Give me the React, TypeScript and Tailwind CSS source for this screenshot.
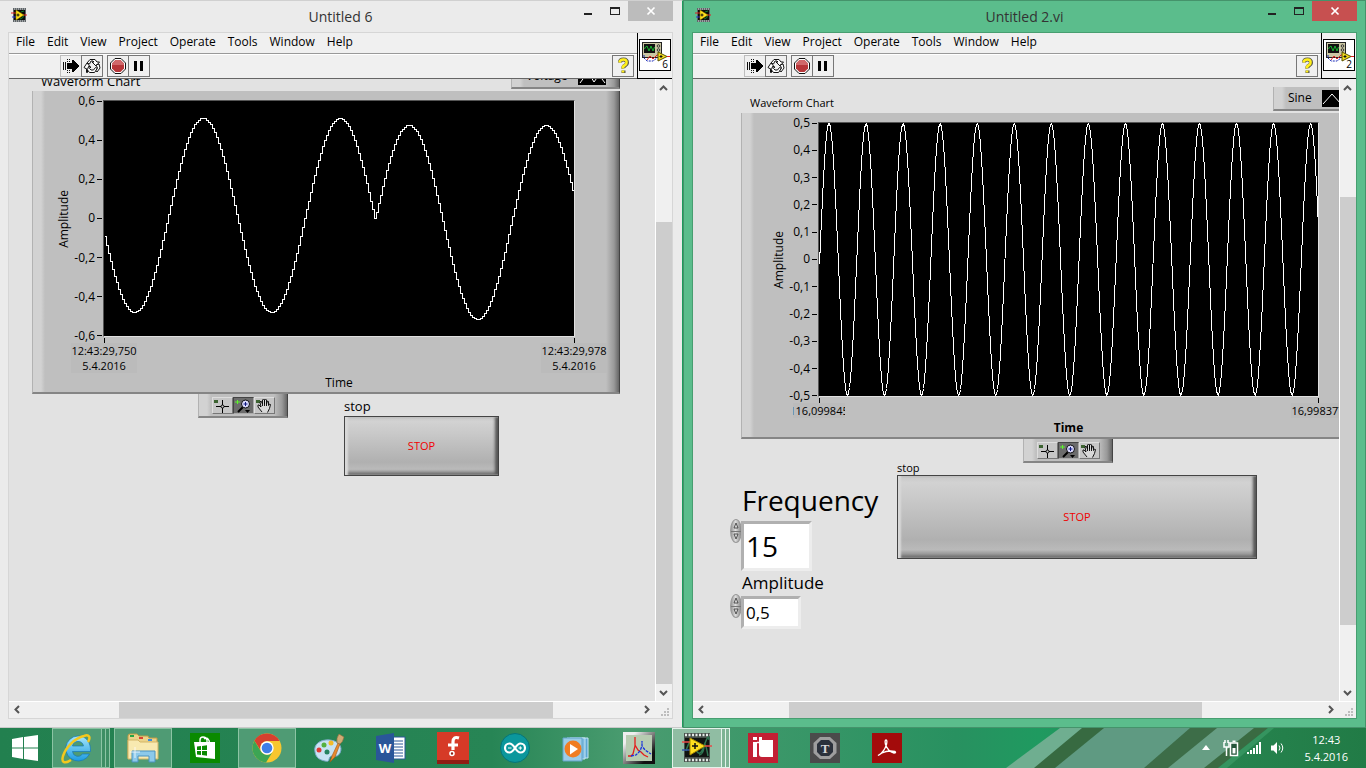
import React from "react";
import clsx from "clsx";

type Point = [number, number];

// ---------- signal data ----------

const voltagePoints = () => {
  const points: Point[] = [];
  for (let x = 0; x <= 470; x += 2) {
    const early = x < 272;
    const phase = ((x - (early ? 98 : 304)) / 137) * Math.PI * 2;
    const y = (early ? 114 : 121) - Math.cos(phase) * 97;
    const last = points[points.length - 1];
    if (last) points.push([x, last[1]]);
    points.push([x, Math.round(y)]);
  }
  return points;
};

const sinePoints = () => {
  const points: Point[] = [];
  for (let x = 0; x <= 499; x++) {
    points.push([x, Math.round(136 - Math.cos(((x - 9.5) / 37.05) * Math.PI * 2) * 136)]);
  }
  return points;
};

const toPolyline = (points: Point[]) => points.map(([x, y]) => `${x + 0.5},${y + 0.5}`).join(" ");

const MENU = ["File", "Edit", "View", "Project", "Operate", "Tools", "Window", "Help"];

// ---------- icons ----------

const ViIcon = ({ className }: { className?: string }) => (
  <svg viewBox="0 0 16 16" className={className} aria-hidden="true">
    <rect x="2" y="1" width="13" height="14" fill="#5f6468" />
    <path d="M3 2h11M3 14h11" stroke="#d9dcdc" strokeWidth="1" strokeDasharray="1 1" />
    <rect x="3" y="3" width="11" height="10" fill="#0c0c0c" />
    <path d="M10 5l3-1M9 12q3 0 4-4" stroke="#0f7d2c" fill="none" />
    <path d="M0 6h5M12 8h4" stroke="#e02020" />
    <path d="M1 10h4" stroke="#2433d6" />
    <path d="M5 3l8 5-8 5z" fill="#ffe11a" stroke="#8a7500" strokeWidth=".5" />
    <path d="M5.500 8h3M7 6.500v3" stroke="#111" />
  </svg>
);

const ScopeIcon = ({ number }: { number: string }) => (
  <div className="relative mx-px mt-[6px] h-8 w-8 border border-black bg-white">
    <svg viewBox="0 0 30 30" className="h-full w-full" aria-hidden="true">
      <rect x="2.500" y="2.500" width="19" height="15" fill="#cbc7a3" stroke="#222" />
      <rect x="4" y="4" width="11" height="9" fill="#111" />
      <path d="M4.500 9l1-2 1.500-1 2 5 2-5 2 5 1.500-4" fill="none" stroke="#17b52f" />
      <circle cx="18.500" cy="6" r="1.300" fill="none" stroke="#333" />
      <circle cx="18.500" cy="10" r="1.300" fill="none" stroke="#333" />
      <path d="M4 15v3l3 3h6l4-3" fill="none" stroke="#1a2ab8" strokeDasharray="2 1" />
      <path d="M7 20l3-4 3 3 4-4h3" fill="none" stroke="#e02020" />
      <path d="M18 12l9 4.500-9 4.500z" fill="#f5df1d" stroke="#5b5200" />
      <path d="M19.500 16.500h3M21 15v3" stroke="#111" />
      <path d="M27 16.500h3" stroke="#e02020" />
    </svg>
    <span className="absolute right-[2px] bottom-0 text-[10px] leading-[12px]">{number}</span>
  </div>
);

const RunIcon = () => (
  <svg viewBox="0 0 20 20" className="h-5 w-5" aria-hidden="true" shapeRendering="crispEdges">
    <path d="M2.500 6v8M4.500 6v8" stroke="#111" />
    <path d="M6.500 3v3M8.500 3v3M6.500 14v3M8.500 14v3" stroke="#111" strokeDasharray="1 1" />
    <path d="M6 7h5V4h1l6 6-6 6h-1v-3H6z" fill="#000" />
  </svg>
);

const RunLoopIcon = () => (
  <svg viewBox="0 0 20 20" className="h-5 w-5" aria-hidden="true">
    <g fill="#fff" stroke="#111" strokeWidth="1" strokeLinejoin="miter">
      <path d="M5 7l3-3.500h5l2 2.500h2.500l-3.500 4-4-4h2l-1-1H9L7.500 8z" />
      <path d="M15.500 12.500l-3 4h-5L5.500 14v2.500h-1V11H9l-1.500 1.500L9 14h2.500l2-2.500z" />
      <path d="M2 11.500L5 7l3 3.500H6.500l-1 3zM14 9l3-1 1 4-3 4-1-1.500 1.500-2.500z" />
    </g>
  </svg>
);

const AbortIcon = () => (
  <svg viewBox="0 0 20 20" className="h-5 w-5" aria-hidden="true">
    <path d="M7 2.500h6l4.500 4.500v6L13 17.500H7L2.500 13V7z" fill="#fff" stroke="#111" />
    <path d="M7.500 4h5L16 7.500v5L12.500 16h-5L4 12.500v-5z" fill="#b73639" />
    <path d="M7.500 4h5L16 7.500V9H4V7.500z" fill="#d0686a" />
  </svg>
);

const PauseIcon = () => (
  <svg viewBox="0 0 20 20" className="h-5 w-5" aria-hidden="true">
    <path d="M5 5h3v10H5zM11 5h3v10h-3z" fill="#000" />
  </svg>
);

const HelpIcon = () => (
  <svg viewBox="0 0 20 20" className="h-5 w-5" aria-hidden="true" fill="none">
    <path d="M7 6.500Q7 3.500 10.500 3.500T14 7Q14 8.500 12 9.500T10.500 12.500M10.500 14.500v2.500" stroke="#55554a" strokeWidth="4" />
    <path d="M6.500 6.500Q7 3.500 10.500 3.500T13.500 7Q13.500 8.500 11.500 9.500T10 12.500M10 14.500v2" stroke="#ffef1a" strokeWidth="2.600" />
  </svg>
);

const Arrow = ({ d }: { d: string }) => (
  <svg viewBox="0 0 17 17" className="h-[17px] w-[17px] shrink-0" aria-hidden="true">
    <path d={d} fill="none" stroke="#555" strokeWidth="2" />
  </svg>
);

// ---------- window chrome ----------

type ScrollProps = { before: number; size: number; after: number };

const VerticalScroll = ({ before, size, after }: ScrollProps) => (
  <div className="flex w-[17px] shrink-0 flex-col border-l border-white bg-[#f0f0f0]">
    <Arrow d="M4 11l3.500-3.500L11 11" />
    <div className="flex min-h-0 flex-1 flex-col">
      <div style={{ flexGrow: before }} />
      <div className="bg-[#cdcdcd]" style={{ flexGrow: size }} />
      <div style={{ flexGrow: after }} />
    </div>
    <Arrow d="M4 7l3.500 3.500L11 7" />
  </div>
);

const HorizontalScroll = ({ before, size, after }: ScrollProps) => (
  <div className="flex h-[17px] shrink-0 border-t border-white bg-[#f0f0f0]">
    <Arrow d="M10 4l-3.500 3.500L10 11" />
    <div className="flex min-w-0 flex-1">
      <div style={{ flexGrow: before }} />
      <div className="bg-[#cdcdcd]" style={{ flexGrow: size }} />
      <div style={{ flexGrow: after }} />
    </div>
    <Arrow d="M7 4l3.500 3.500L7 11" />
    <svg viewBox="0 0 17 16" className="h-4 w-[17px] shrink-0" aria-hidden="true" fill="#bdbdbd">
      <path d="M12 6h2v2h-2zM9 9h2v2H9zM12 9h2v2h-2zM6 12h2v2H6zM9 12h2v2H9zM12 12h2v2h-2z" />
    </svg>
  </div>
);

const ToolButton = ({ label, light, children }: { label: string; light?: boolean; children: React.ReactNode }) => (
  <button
    type="button"
    aria-label={label}
    className={clsx(
      "-ml-px flex h-[22px] w-[22px] items-center justify-center border",
      light ? "border-[#bdbdbd]" : "border-[#777]",
    )}
  >
    {children}
  </button>
);

type ViWindowProps = {
  title: string;
  number: string;
  active?: boolean;
  vertical: ScrollProps;
  horizontal: ScrollProps;
  children: React.ReactNode;
};

const ViWindow = ({ title, number, active, vertical, horizontal, children }: ViWindowProps) => (
  <section
    className={clsx(
      "flex min-w-0 flex-1 flex-col border-y pb-2",
      active
        ? "border-x border-[#45936b] bg-[#5bbd8c] px-2"
        : "border-r border-t-[#d0d0d0] border-r-[#1c9a5c] border-b-[#c9c9c9] bg-[#ebebeb] pr-[9px] pl-2",
    )}
  >
    <header className="grid h-[31px] shrink-0 grid-cols-[1fr_auto_1fr] items-start">
      <ViIcon className="mt-[6px] ml-[3px] h-4 w-4" />
      <h1 className="text-[14px] leading-8 text-[#333]">{title}</h1>
      <div className="flex justify-end">
        <button type="button" aria-label="Minimize" className="flex h-5 w-[26px] items-center justify-center">
          <svg viewBox="0 0 12 10" className="h-[10px] w-3" aria-hidden="true">
            <path d="M2 8h8" stroke="#222" strokeWidth="2" />
          </svg>
        </button>
        <button type="button" aria-label="Maximize" className="flex h-5 w-[27px] items-center justify-center">
          <svg viewBox="0 0 12 10" className="h-[10px] w-3" aria-hidden="true" shapeRendering="crispEdges">
            <path d="M1.500 1.500h9v7h-9z" fill="none" stroke="#222" />
            <path d="M1 2.500h10" stroke="#222" />
          </svg>
        </button>
        <button
          type="button"
          aria-label="Close"
          className={clsx("flex h-5 w-[45px] items-center justify-center", active ? "bg-[#c75050]" : "bg-[#bcbcbc]")}
        >
          <svg viewBox="0 0 10 10" className="h-[10px] w-[10px]" aria-hidden="true">
            <path d="M1.500 1.500l7 7M8.500 1.500l-7 7" stroke="#fff" strokeWidth="1.700" />
          </svg>
        </button>
      </div>
    </header>

    <div
      className={clsx(
        "flex min-h-0 flex-1 flex-col border bg-[#f0f0f0]",
        active ? "border-[#479e70]" : "border-[#d6d6d6]",
      )}
    >
      <div className="flex shrink-0">
        <div className="min-w-0 flex-1">
          <nav className="flex h-[21px] items-start gap-3 border-b border-[#999] pl-[7px] text-[12px] leading-[17px]">
            {MENU.map((item) => (
              <button key={item} type="button">
                {item}
              </button>
            ))}
          </nav>
          <div className="flex h-[25px] items-start border-t border-b border-t-white border-b-[#666] pr-[3px] pl-[52px]">
            <ToolButton label="Run" light>
              <RunIcon />
            </ToolButton>
            <ToolButton label="Run continuously">
              <RunLoopIcon />
            </ToolButton>
            <div className="w-[5px]" />
            <ToolButton label="Abort">
              <AbortIcon />
            </ToolButton>
            <ToolButton label="Pause">
              <PauseIcon />
            </ToolButton>
            <div className="flex-1" />
            <ToolButton label="Context help">
              <HelpIcon />
            </ToolButton>
          </div>
        </div>
        <div className="w-[35px] shrink-0 border-b border-l border-black">
          <ScopeIcon number={number} />
        </div>
      </div>

      <div className="flex min-h-0 flex-1">
        <main className="min-w-0 flex-1 overflow-hidden bg-[#e2e2e2]">{children}</main>
        <VerticalScroll {...vertical} />
      </div>
      <HorizontalScroll {...horizontal} />
    </div>
  </section>
);

// ---------- front panel controls ----------

const BEVEL =
  "border-l border-b-2 border-r border-l-[#b2b2b2] border-b-[#858585] border-r-[#444] bg-[linear-gradient(90deg,#d2d2d2_0,#d2d2d2_8px,#bfbfbf_12px,#bfbfbf_calc(100%-13px),#999_calc(100%-5px),#666_100%)]";

type ChartProps = {
  legend: string;
  titleClass: string;
  legendClass: string;
  legendPath: string;
  boxClass: string;
  gridClass: string;
  viewBox: string;
  ticks: string[];
  xLabels: string[][];
  points: Point[];
  strokeWidth: number;
  boldTime?: boolean;
};

const WaveformChart = (props: ChartProps) => (
  <div className={props.boxClass}>
    <div className="flex h-[26px] items-start justify-between">
      <h2 className={clsx("pl-[9px] leading-8", props.titleClass)}>Waveform Chart</h2>
      <div className={clsx("flex h-6 items-center pl-[14px] text-[12px]", BEVEL, props.legendClass)}>
        <span>{props.legend}</span>
        <svg viewBox="0 0 28 17" className="ml-[10px] h-[17px] w-7 bg-black" aria-hidden="true">
          <path d={props.legendPath} fill="none" stroke="#fff" />
        </svg>
      </div>
    </div>
    <div className={clsx("grid pt-[9px] pb-[2px]", BEVEL, props.gridClass)}>
      <div className="flex justify-end">
        <div className="flex w-4 items-center justify-center">
          <span className="rotate-180 text-[12px] leading-4 [writing-mode:vertical-rl]">Amplitude</span>
        </div>
        <ol className="-my-[7px] flex w-[31px] flex-col justify-between text-[12px] leading-4">
          {props.ticks.map((tick) => (
            <li key={tick} className="flex items-center justify-end gap-[2px] pr-px">
              {tick}
              <span className="h-px w-[5px] bg-black" />
            </li>
          ))}
        </ol>
      </div>
      <svg
        viewBox={props.viewBox}
        className="block w-full border border-t-[#555] border-r-[#e0e0e0] border-b-[#e0e0e0] border-l-[#555] bg-black"
        shapeRendering="crispEdges"
        role="img"
        aria-label={`${props.legend} waveform`}
      >
        <polyline points={toPolyline(props.points)} fill="none" stroke="#fff" strokeWidth={props.strokeWidth} />
      </svg>
      <div className="col-start-2 -mx-[31px] flex justify-between text-[11px] leading-[15px]">
        {props.xLabels.map((lines) => (
          <div key={lines[0]} className="flex w-16 flex-col items-center pt-px">
            <span className="h-[5px] w-px bg-black" />
            <div
              className={clsx(
                "flex flex-col items-center overflow-hidden bg-[#bbb] whitespace-nowrap",
                lines[0].length === 10 && "w-[52px]",
              )}
            >
              {lines.map((line) => (
                <span key={line}>{line}</span>
              ))}
            </div>
          </div>
        ))}
      </div>
      <div
        className={clsx("col-start-2 mt-[2px] text-center text-[12px] leading-[15px]", props.boldTime && "font-bold")}
      >
        Time
      </div>
    </div>
  </div>
);

const GraphPalette = () => (
  <div className={clsx("flex h-6 w-[90px] shrink-0 items-center pl-[13px]", BEVEL)}>
    <button type="button" aria-label="Cursor" className="h-[17px] w-[21px] border border-t-[#ddd] border-r-[#777] border-b-[#777] border-l-[#ddd] bg-[#c6c6c6]">
      <svg viewBox="0 0 19 15" className="h-[15px] w-[19px]" aria-hidden="true">
        <path d="M1 2h4v3H1z" fill="#3c6331" />
        <path d="M3 8.500h13M9.500 2v13" stroke="#000" />
        <circle cx="9.500" cy="8.500" r="1.500" fill="#ccc" stroke="#000" />
      </svg>
    </button>
    <button type="button" aria-label="Zoom" className="h-[17px] w-[21px] border border-t-[#444] border-r-[#aaa] border-b-[#aaa] border-l-[#444] bg-[#6c6c6c]">
      <svg viewBox="0 0 19 15" className="h-[15px] w-[19px]" aria-hidden="true">
        <path d="M1 4h5M3.500 2v4" stroke="#5cf52c" />
        <path d="M9 9l-5 5" stroke="#000" strokeWidth="2" />
        <circle cx="11.500" cy="6" r="4" fill="#dadaff" stroke="#111" />
        <path d="M9.500 6h4M11.500 4v4" stroke="#111a80" />
        <path d="M11 12h5l-2.500 3z" fill="#000" />
      </svg>
    </button>
    <button type="button" aria-label="Pan" className="h-[17px] w-[21px] border border-t-[#ddd] border-r-[#777] border-b-[#777] border-l-[#ddd] bg-[#c6c6c6]">
      <svg viewBox="0 0 19 15" className="h-[15px] w-[19px]" aria-hidden="true">
        <path d="M1 2h4v3H1z" fill="#3c6331" />
        <path
          d="M7 14L3 9V7h1l2 2-1-5 1-1 1.500 3V2l1-1 1 1v4-4l1-1 1 1v4l1-3 1 .500v4l1-1.500 1 .500-1 4-2 4M7.500 6v2M9.500 6v2M11.500 6v2"
          fill="#d8d8d8"
          stroke="#000"
          strokeWidth=".9"
        />
      </svg>
    </button>
  </div>
);

const StopButton = ({ className }: { className: string }) => (
  <button
    type="button"
    className={clsx(
      "block border border-[#444] bg-[linear-gradient(180deg,#c8c8c8_0,#d2d2d2_8%,#c8c8c8_30%,#b0b0b0_78%,#bababa_90%,#777_100%)] text-[11px] text-[#f00000] shadow-[inset_3px_0_2px_#d8d8d8,inset_-3px_-1px_3px_#555]",
      className,
    )}
  >
    STOP
  </button>
);

const Spinner = ({ name }: { name: string }) => (
  <div className="flex h-6 w-3 flex-col overflow-hidden rounded-[50%] border border-[#999] bg-[linear-gradient(90deg,#999,#ddd_45%,#888)]">
    <button type="button" aria-label={`Increase ${name}`} className="flex-1 border-b border-[#777]">
      <svg viewBox="0 0 10 10" className="h-[10px] w-[10px]" aria-hidden="true">
        <path d="M3 8l2-5 2 5z" fill="#ddd" stroke="#444" strokeWidth=".9" />
      </svg>
    </button>
    <button type="button" aria-label={`Decrease ${name}`} className="flex-1">
      <svg viewBox="0 0 10 10" className="h-[10px] w-[10px]" aria-hidden="true">
        <path d="M3 2l2 5 2-5z" fill="#ddd" stroke="#444" strokeWidth=".9" />
      </svg>
    </button>
  </div>
);

const NumericControl = ({
  name,
  value,
  labelClass,
  inputClass,
}: {
  name: string;
  value: string;
  labelClass: string;
  inputClass: string;
}) => {
  const id = name.toLowerCase();
  return (
    <div>
      <label htmlFor={id} className={clsx("ml-3 block", labelClass)}>
        {name}
      </label>
      <div className="-mt-px flex items-start">
        <Spinner name={name} />
        <input
          id={id}
          defaultValue={value}
          className={clsx(
            "mt-[2px] -ml-px border-[3px] border-t-[#b0b0b0] border-r-[#ededed] border-b-[#ededed] border-l-[#b0b0b0] bg-white pl-[2px]",
            inputClass,
          )}
        />
      </div>
    </div>
  );
};

// ---------- taskbar ----------

const TASKS: { name: string; state?: "open" | "stack" | "active"; icon: React.ReactNode }[] = [
  {
    name: "Internet Explorer",
    state: "stack",
    icon: (
      <svg viewBox="0 0 32 32" className="h-8 w-8" aria-hidden="true">
        <defs>
          <linearGradient id="ie" x1="0" y1="0" x2="0" y2="1">
            <stop offset="0" stopColor="#a5e6fb" />
            <stop offset="1" stopColor="#1d9be0" />
          </linearGradient>
        </defs>
        <path
          d="M17 4a12.500 12.500 0 1 0 11.500 18h-7a5.500 5.500 0 0 1-10-2.500H29.500C30 10 25 4 17 4zM11.500 14a5.600 5.600 0 0 1 11 0z"
          fill="url(#ie)"
          stroke="#1679b8"
          strokeWidth=".7"
        />
        <path d="M27 10c3-5 1-8-4-6C14 6 5 15 2 24c-2 7 2 8 8 4" fill="none" stroke="#f4c81d" strokeWidth="2.500" />
      </svg>
    ),
  },
  {
    name: "File Explorer",
    state: "open",
    icon: (
      <svg viewBox="0 0 34 32" className="h-8 w-[34px]" aria-hidden="true">
        <path d="M2 4q0-2 2-2h7l2 2h9l1 2h8v20H2z" fill="#ecd38a" stroke="#bf9a45" />
        <path d="M4 3h4v2H4z" fill="#26a544" />
        <path d="M13 5h4v2h-4z" fill="#d84332" />
        <path d="M22 7h4v2h-4z" fill="#3a8ce0" />
        <path d="M2 8h10l2 2h18v17H2z" fill="#f8e9b0" stroke="#d3b566" />
        <path d="M6 30V19h23v11h-6v-6H12v6z" fill="#8cc9ea" stroke="#4b92bf" />
        <path d="M9 15v11M4 20h10" stroke="#fff" opacity=".8" />
      </svg>
    ),
  },
  {
    name: "Store",
    icon: (
      <svg viewBox="0 0 30 30" className="h-[30px] w-[30px]" aria-hidden="true">
        <path d="M0 0h30v30H0z" fill="#0a8a00" />
        <path d="M10 10V7q0-3 3-3t4 3v3M14 6q2-2 4 0t1 4" fill="none" stroke="#fff" strokeWidth="1.400" />
        <path d="M4 9h21v17l-19-2z" fill="#fff" />
        <path d="M7 13.500l4-.500v4H7zM12 13l5-.700V17h-5zM7 18h4v4l-4-.500zM12 18h5v4.700l-5-.700z" fill="#0a8a00" />
      </svg>
    ),
  },
  {
    name: "Chrome",
    state: "open",
    icon: (
      <svg viewBox="0 0 30 30" className="h-[30px] w-[30px]" aria-hidden="true">
        <circle cx="15" cy="15" r="14.500" fill="#f7c62f" />
        <path d="M2.400 7.800A14.500 14.500 0 0 1 27.600 8H15a7 7 0 0 0-6.600 9z" fill="#d6402f" />
        <path d="M2.400 7.800A14.500 14.500 0 0 0 14 29.500l6.500-10.500a7 7 0 0 1-11.800-1z" fill="#3ca554" />
        <circle cx="15" cy="15" r="6.700" fill="#fff" />
        <circle cx="15" cy="15" r="5.300" fill="#3f7ee8" />
      </svg>
    ),
  },
  {
    name: "Paint",
    icon: (
      <svg viewBox="0 0 32 32" className="h-8 w-8" aria-hidden="true">
        <path d="M2 20C0 12 8 7 17 8s13 7 10 13-8 1-10 4 0 5-5 4S3 26 2 20z" fill="#c8e3f3" stroke="#7aa8c9" />
        <circle cx="6" cy="18" r="2.500" fill="#dd3a34" />
        <circle cx="11" cy="13" r="2.500" fill="#55b13f" />
        <circle cx="18" cy="11" r="2.500" fill="#f3bb29" />
        <circle cx="14" cy="20" r="2.500" fill="#258360" />
        <path d="M17 30l2-6 6-13 2 1-5 13z" fill="#e88a30" stroke="#a55716" strokeWidth=".6" />
        <path d="M24 11q-1-5 2-9l5 3q-1 5-4 7z" fill="#d0ab75" stroke="#8c6a3a" strokeWidth=".6" />
      </svg>
    ),
  },
  {
    name: "Word",
    icon: (
      <svg viewBox="0 0 30 30" className="h-[30px] w-[30px]" aria-hidden="true">
        <path d="M15 4h14v22H15z" fill="#fff" stroke="#2a5699" />
        <path d="M18 8h9M18 11h9M18 14h9M18 17h9M18 20h9M18 23h9" stroke="#2a5699" />
        <path d="M0 3l18-3v30L0 27z" fill="#2a5699" />
        <text x="9" y="20" textAnchor="middle" fontSize="13" fontWeight="700" fill="#fff">
          W
        </text>
      </svg>
    ),
  },
  {
    name: "Fritzing",
    icon: (
      <svg viewBox="0 0 32 32" className="h-8 w-8" aria-hidden="true">
        <path d="M0 0h32v32H0z" fill="#d63a27" />
        <path d="M0 28h32v4H0z" fill="#8e1e14" />
        <path d="M22 6q-6-2-6 4v8M11 13h10" fill="none" stroke="#fff" strokeWidth="3.200" />
        <circle cx="15" cy="21.500" r="2" fill="#8e1e14" stroke="#fff" strokeWidth="1.600" />
      </svg>
    ),
  },
  {
    name: "Arduino",
    icon: (
      <svg viewBox="0 0 30 30" className="h-[30px] w-[30px]" aria-hidden="true">
        <circle cx="15" cy="15" r="14.500" fill="#0b979c" stroke="#077579" />
        <path
          d="M15 15q-3-4.500-5.500-4.500a4.500 4.500 0 0 0 0 9Q12 19.500 15 15t5.500-4.500a4.500 4.500 0 0 1 0 9Q18 19.500 15 15z"
          fill="none"
          stroke="#fff"
          strokeWidth="2.200"
        />
        <path d="M8 15h3.500M18.500 15H22M20.300 13.300v3.500" stroke="#fff" />
      </svg>
    ),
  },
  {
    name: "Media Player",
    icon: (
      <svg viewBox="0 0 30 30" className="h-[30px] w-[30px]" aria-hidden="true">
        <path d="M8 5h18v20H8z" fill="#5ca6d3" stroke="#c5e5f5" />
        <path d="M5 5h18v21H5z" fill="#7dbbe0" stroke="#c5e5f5" />
        <path d="M1 5h19v23H1z" fill="#9bcce8" stroke="#61a4ca" />
        <circle cx="11" cy="16" r="8.500" fill="#f07d22" />
        <path d="M8 11l8 5-8 5.500z" fill="#fff" />
      </svg>
    ),
  },
  {
    name: "Spectra",
    icon: (
      <svg viewBox="0 0 32 32" className="h-8 w-8" aria-hidden="true">
        <defs>
          <linearGradient id="frame" x1="0" y1="0" x2="1" y2="1">
            <stop offset=".2" stopColor="#eee" />
            <stop offset=".8" stopColor="#111" />
          </linearGradient>
        </defs>
        <path d="M0 0h32v32H0z" fill="url(#frame)" />
        <path d="M3 3h26v26H3z" fill="#b7ccb1" />
        <path d="M5 24h3l2-2 2-8V5v8l3 5 3 2 3 3 4 2" fill="none" stroke="#e51b1b" strokeWidth="1.300" />
        <path d="M8 24l5-1 4-4 2-5V9v5l3 4 6 4" fill="none" stroke="#1930dd" strokeWidth="1.300" strokeDasharray="3 1" />
      </svg>
    ),
  },
  {
    name: "LabVIEW",
    state: "active",
    icon: (
      <svg viewBox="0 0 32 32" className="h-8 w-8" aria-hidden="true">
        <path d="M3 1h26v29H3z" fill="#47504b" />
        <path d="M4 3h25M4 28h25" stroke="#e6eae7" strokeWidth="2.500" strokeDasharray="2 1.500" />
        <path d="M4 6h24v19H4z" fill="#101411" />
        <path d="M5 19q5-17 9-4t9-1 5-6M18 23q4 0 5-8t4 9" fill="none" stroke="#2f7551" strokeWidth="1.500" />
        <path d="M1 10h8M24 14h7" stroke="#e84949" strokeWidth="1.500" />
        <path d="M1 18h8" stroke="#3359a8" strokeWidth="1.500" />
        <path d="M9 6l15 8-15 9z" fill="#ffdf1f" stroke="#a88b00" />
        <path d="M11 14h6M14 11v6" stroke="#111" strokeWidth="1.500" />
      </svg>
    ),
  },
  {
    name: "iT",
    icon: (
      <svg viewBox="0 0 30 30" className="h-[30px] w-[30px]" aria-hidden="true">
        <path d="M0 0h30v30H0z" fill="#c22034" />
        <path d="M5 4h4v3H5zM5 9h4v15H5zM11 4h3v3h11v17H14q-3 0-3-3V10H9V9h2z" fill="#fff" />
        <path d="M9 9.500h6" stroke="#fff" strokeWidth="1.500" />
      </svg>
    ),
  },
  {
    name: "T",
    icon: (
      <svg viewBox="0 0 30 30" className="h-[30px] w-[30px]" aria-hidden="true">
        <path d="M0 0h30v30H0z" fill="#4b4b4b" />
        <path d="M10 4h10l6.500 6v10L20 26H10l-6.500-6V10z" fill="#9e9e9e" />
        <path d="M11 7h8l4 4v8l-4 4h-8l-4-4v-8z" fill="#2b313b" />
        <text x="15" y="20" textAnchor="middle" fontSize="13" fontWeight="700" fontFamily="Liberation Serif, serif" fill="#d8d8d8">
          T
        </text>
      </svg>
    ),
  },
  {
    name: "Adobe Reader",
    icon: (
      <svg viewBox="0 0 30 30" className="h-[30px] w-[30px]" aria-hidden="true">
        <path d="M0 0h30v30H0z" fill="#a30b0b" />
        <path
          d="M7 22q5-3 7.500-10.500Q15.500 7 14 7t-.5 4.500q2.500 7 8.500 8.500 2.500 0 1-1.500-7-1.500-13 1.500-5 3-3 2z"
          fill="none"
          stroke="#fff"
          strokeWidth="1.300"
        />
      </svg>
    ),
  },
];

const Taskbar = () => (
  <footer className="relative flex h-10 shrink-0 gap-1 overflow-hidden bg-[linear-gradient(90deg,#22804f_0,#278555_36%,#4a9c70_46%,#289160_70%,#1f9a60_76%,#278550_88%,#217b46_100%)]">
    <svg
      viewBox="0 0 366 40"
      className="pointer-events-none absolute top-0 right-0 h-10 w-[366px]"
      aria-hidden="true"
    >
      <path d="M60 0h24L36 40H6z" fill="#6fae90" />
      <path d="M82 0h24L57 40H34z" fill="#376a41" />
      <path d="M104 0h90l-48 40H55z" fill="#5f9a82" />
      <path d="M190 0h30l-50 40h-26z" fill="#3d6d48" />
      <path d="M217 0h39l-50 40h-38z" fill="#679e84" />
      <path d="M254 0h14l-50 40h-14z" fill="#3a6b42" />
      <path d="M268 0h6l-47 40h-9z" fill="#35945f" />
    </svg>
    <button type="button" aria-label="Start" className="flex w-12 shrink-0 items-center pl-3">
      <svg viewBox="0 0 26 26" className="h-[26px] w-[26px]" aria-hidden="true" fill="#fff">
        <path d="M0 4l11-2v10.500H0zM12 2l14-2v12.500H12zM0 13.500h11V24L0 22zM12 13.500h14V26l-14-2z" />
      </svg>
    </button>
    {TASKS.map((task) => (
      <div key={task.name} className="relative flex w-[58px] shrink-0">
        <button
          type="button"
          aria-label={task.name}
          className={clsx(
            "flex min-w-0 flex-1 items-center justify-center",
            (task.state === "open" || task.state === "stack") && "border border-[#8cc4a4] bg-[#4f9b74]",
            task.state === "active" && "border border-[#e3f2ea] bg-[#90bda3]",
          )}
        >
          {task.icon}
        </button>
        {(task.state === "stack" || task.state === "active") &&
          [1, 2].map((edge) => (
            <span
              key={edge}
              className={clsx(
                "w-1 border border-l-0",
                task.state === "active" ? "border-[#e3f2ea] bg-[#7db394]" : "border-[#8cc4a4] bg-[#3d8e64]",
              )}
            />
          ))}
      </div>
    ))}
    <div className="relative ml-auto flex items-center pr-[18px] text-white">
      <button type="button" aria-label="Show hidden icons" className="mr-[13px]">
        <svg viewBox="0 0 8 6" className="h-[6px] w-2" aria-hidden="true">
          <path d="M4 0l4 5H0z" fill="#fff" />
        </svg>
      </button>
      <svg viewBox="0 0 16 18" className="h-[18px] w-4" aria-hidden="true">
        <path d="M1 3v5h5V3M3.500 8v9M2 1v3M5 1v3" fill="none" stroke="#fff" strokeWidth="1.500" />
        <path d="M7.500 4h7v12.500h-7z" fill="#25553a" stroke="#fff" strokeWidth="1.500" />
        <path d="M9.500 1.500h3V3h-3zM9.500 9h3v5.500h-3z" fill="#fff" />
      </svg>
      <svg viewBox="0 0 16 14" className="ml-2 h-[14px] w-4" aria-hidden="true" fill="#fff">
        <path d="M0 11h2v2H0zM3 9h2v4H3zM6 7h2v6H6zM9 4h2v9H9zM12 1h2v12h-2z" />
      </svg>
      <svg viewBox="0 0 16 16" className="ml-[7px] h-4 w-4" aria-hidden="true">
        <path d="M1 5.500h2.500L7 2v12l-3.500-3.500H1z" fill="#fff" />
        <path d="M9 5.500q2 2.500 0 5M11 3.500q3.500 4.500 0 9" fill="none" stroke="#fff" />
      </svg>
      <div className="ml-[18px] text-center text-[11px] leading-[17px]">
        <div>12:43</div>
        <div>5.4.2016</div>
      </div>
    </div>
  </footer>
);

export default function App() {
  return (
    <div className="flex h-screen flex-col overflow-hidden bg-[#1c9a5c] font-['Open_Sans','Noto_Sans',sans-serif] text-black">
      <div className="flex min-h-0 flex-1">
        <ViWindow
          title="Untitled 6"
          number="6"
          vertical={{ before: 126, size: 462, after: 0 }}
          horizontal={{ before: 93, size: 434, after: 85 }}
        >
          <div className="-mt-[14px] pl-[23px]">
            <WaveformChart
              legend="Voltage"
              titleClass="text-[13px]"
              legendClass="w-[109px]"
              legendPath="M2 15l8-11 6 10 5-7 6 8"
              boxClass="w-[588px]"
              gridClass="grid-cols-[70px_472px]"
              viewBox="0 0 470 235"
              ticks={["0,6", "0,4", "0,2", "0", "-0,2", "-0,4", "-0,6"]}
              xLabels={[
                ["12:43:29,750", "5.4.2016"],
                ["12:43:29,978", "5.4.2016"],
              ]}
              points={voltagePoints()}
              strokeWidth={1.5}
            />
            <div className="flex items-start pl-[166px]">
              <GraphPalette />
              <div className="ml-14">
                <div className="h-[22px] text-[13px] leading-6">stop</div>
                <StopButton className="h-[60px] w-[155px]" />
              </div>
            </div>
          </div>
        </ViWindow>

        <ViWindow
          title="Untitled 2.vi"
          number="2"
          active
          vertical={{ before: 101, size: 428, after: 59 }}
          horizontal={{ before: 79, size: 413, after: 120 }}
        >
          <div className="pt-2 pl-[37px]">
            <div className="pl-[11px]">
              <WaveformChart
                legend="Sine"
                titleClass="text-[11px]"
                legendClass="w-[79px]"
                legendPath="M1 14L10 4l9 10 9-10"
                boxClass="w-[611px]"
                gridClass="grid-cols-[76px_501px]"
                viewBox="0 0 499 273"
                ticks={["0,5", "0,4", "0,3", "0,2", "0,1", "0", "-0,1", "-0,2", "-0,3", "-0,4", "-0,5"]}
                xLabels={[["116,099845"], ["16,998377"]]}
                points={sinePoints()}
                strokeWidth={1}
                boldTime
              />
            </div>
            <div className="pl-[293px]">
              <GraphPalette />
            </div>
            <div className="flex items-start">
              <div className="w-[167px] shrink-0 pt-[17px]">
                <NumericControl
                  name="Frequency"
                  value="15"
                  labelClass="text-[28px] leading-10"
                  inputClass="h-[50px] w-[71px] text-[28px]"
                />
                <NumericControl
                  name="Amplitude"
                  value="0,5"
                  labelClass="text-[17px] leading-6"
                  inputClass="h-[33px] w-[60px] text-[17px]"
                />
              </div>
              <div>
                <div className="h-3 text-[11px] leading-[9px]">stop</div>
                <StopButton className="h-[84px] w-[360px]" />
              </div>
            </div>
          </div>
        </ViWindow>
      </div>
      <Taskbar />
    </div>
  );
}
